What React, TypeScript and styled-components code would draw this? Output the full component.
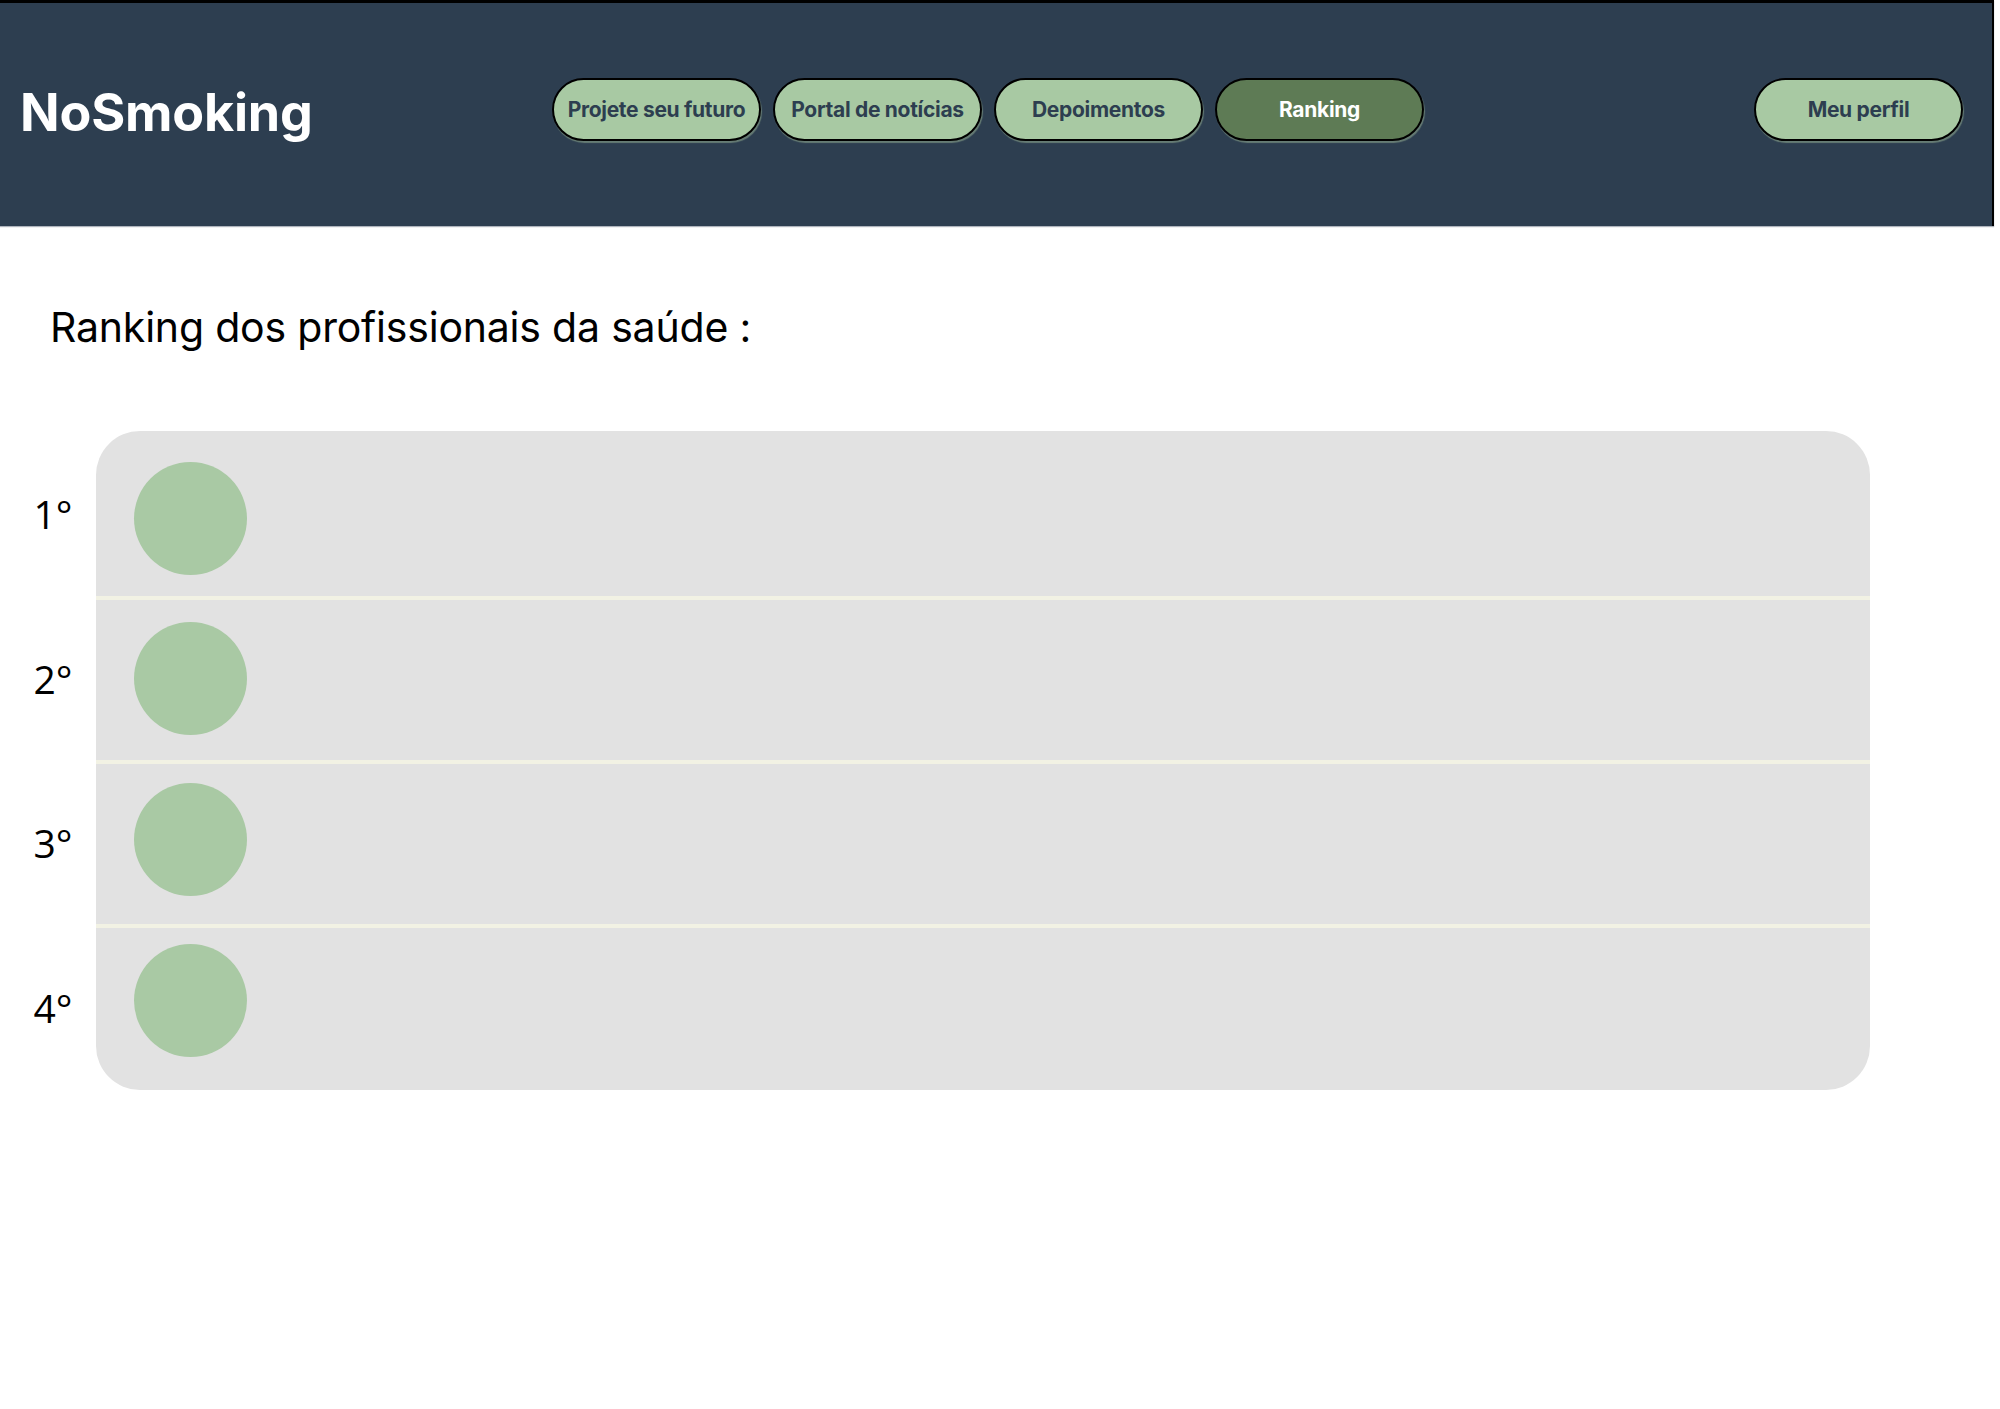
import React from "react";
import styled, { createGlobalStyle } from "styled-components";

const GlobalStyle = createGlobalStyle`
  html, body {
    margin: 0;
    padding: 0;
    background: #ffffff;
  }
  body {
    font-family: Inter, "Open Sans", "Liberation Sans", sans-serif;
  }
  * { box-sizing: border-box; }
`;

const Header = styled.header`
  display: flex;
  align-items: center;
  height: 226px;
  margin-right: 6px;
  padding: 0 29px 10px 20px;
  background: #2d3e50;
  border-top: 3px solid #000;
  border-right: 2px solid #000;
  box-shadow: 0 1px 1px rgba(120, 130, 145, 0.6);
`;

const Logo = styled.h1`
  flex: 0 0 532px;
  margin: 6px 0 0 0;
  color: #ffffff;
  font-family: Inter, "Liberation Sans", sans-serif;
  font-weight: 700;
  font-size: 52px;
  letter-spacing: -0.2px;
`;

const Nav = styled.nav`
  display: flex;
  gap: 12px;
`;

const NavButton = styled.button<{ $active?: boolean }>`
  width: 209px;
  height: 63px;
  border: 2px solid #000;
  border-radius: 32px;
  background: ${(p) => (p.$active ? "#5e7b55" : "#a8c9a3")};
  color: ${(p) => (p.$active ? "#ffffff" : "#2d3e50")};
  font-family: Inter, "Liberation Sans", sans-serif;
  font-weight: 700;
  font-size: 21px;
  letter-spacing: -0.3px;
  box-shadow: 1px 2px 1px rgba(150, 175, 145, 0.55);
  cursor: pointer;
  padding: 0;
`;

const ProfileButton = styled(NavButton)`
  margin-left: auto;
`;

const Main = styled.main`
  padding: 0;
`;

const Title = styled.h2`
  margin: 0;
  padding: 76px 0 0 50px;
  height: 205px;
  font-family: Inter, "Liberation Sans", sans-serif;
  font-weight: 400;
  font-size: 41px;
  letter-spacing: -0.2px;
  color: #000;
`;

const Board = styled.section`
  width: 1870px;
  display: flex;
  flex-direction: column;
`;

const RankRow = styled.div`
  display: grid;
  grid-template-columns: 96px 1fr;
`;

const RankLabel = styled.div`
  display: flex;
  align-items: center;
  justify-content: center;
  padding-left: 10px;
  font-family: "Open Sans", "Noto Sans", sans-serif;
  font-size: 39px;
  color: #000;
`;

const RankCell = styled.div<{ $first?: boolean; $last?: boolean; $padTop: number }>`
  display: flex;
  align-items: flex-start;
  height: ${(p) => (p.$first ? "165px" : p.$last ? "166px" : "164px")};
  padding: ${(p) => p.$padTop}px 0 0 38px;
  background: #e2e2e2;
  border-top: ${(p) => (p.$first ? "none" : "4px solid #f2f2e4")};
  border-radius: ${(p) =>
    p.$first ? "44px 44px 0 0" : p.$last ? "0 0 44px 44px" : "0"};
`;

const Avatar = styled.div`
  width: 113px;
  height: 113px;
  border-radius: 50%;
  background: #a9c9a4;
`;

const navItems = ["Projete seu futuro", "Portal de notícias", "Depoimentos", "Ranking"];
const ranks = [
  { label: "1°", padTop: 31 },
  { label: "2°", padTop: 22 },
  { label: "3°", padTop: 19 },
  { label: "4°", padTop: 16 },
];

export default function App() {
  return (
    <>
      <GlobalStyle />
      <Header>
        <Logo>NoSmoking</Logo>
        <Nav>
          {navItems.map((item) => (
            <NavButton key={item} $active={item === "Ranking"}>
              {item}
            </NavButton>
          ))}
        </Nav>
        <ProfileButton>Meu perfil</ProfileButton>
      </Header>
      <Main>
        <Title>Ranking dos profissionais da saúde :</Title>
        <Board>
          {ranks.map((r, i) => (
            <RankRow key={r.label}>
              <RankLabel>{r.label}</RankLabel>
              <RankCell
                $first={i === 0}
                $last={i === ranks.length - 1}
                $padTop={r.padTop}
              >
                <Avatar />
              </RankCell>
            </RankRow>
          ))}
        </Board>
      </Main>
    </>
  );
}
